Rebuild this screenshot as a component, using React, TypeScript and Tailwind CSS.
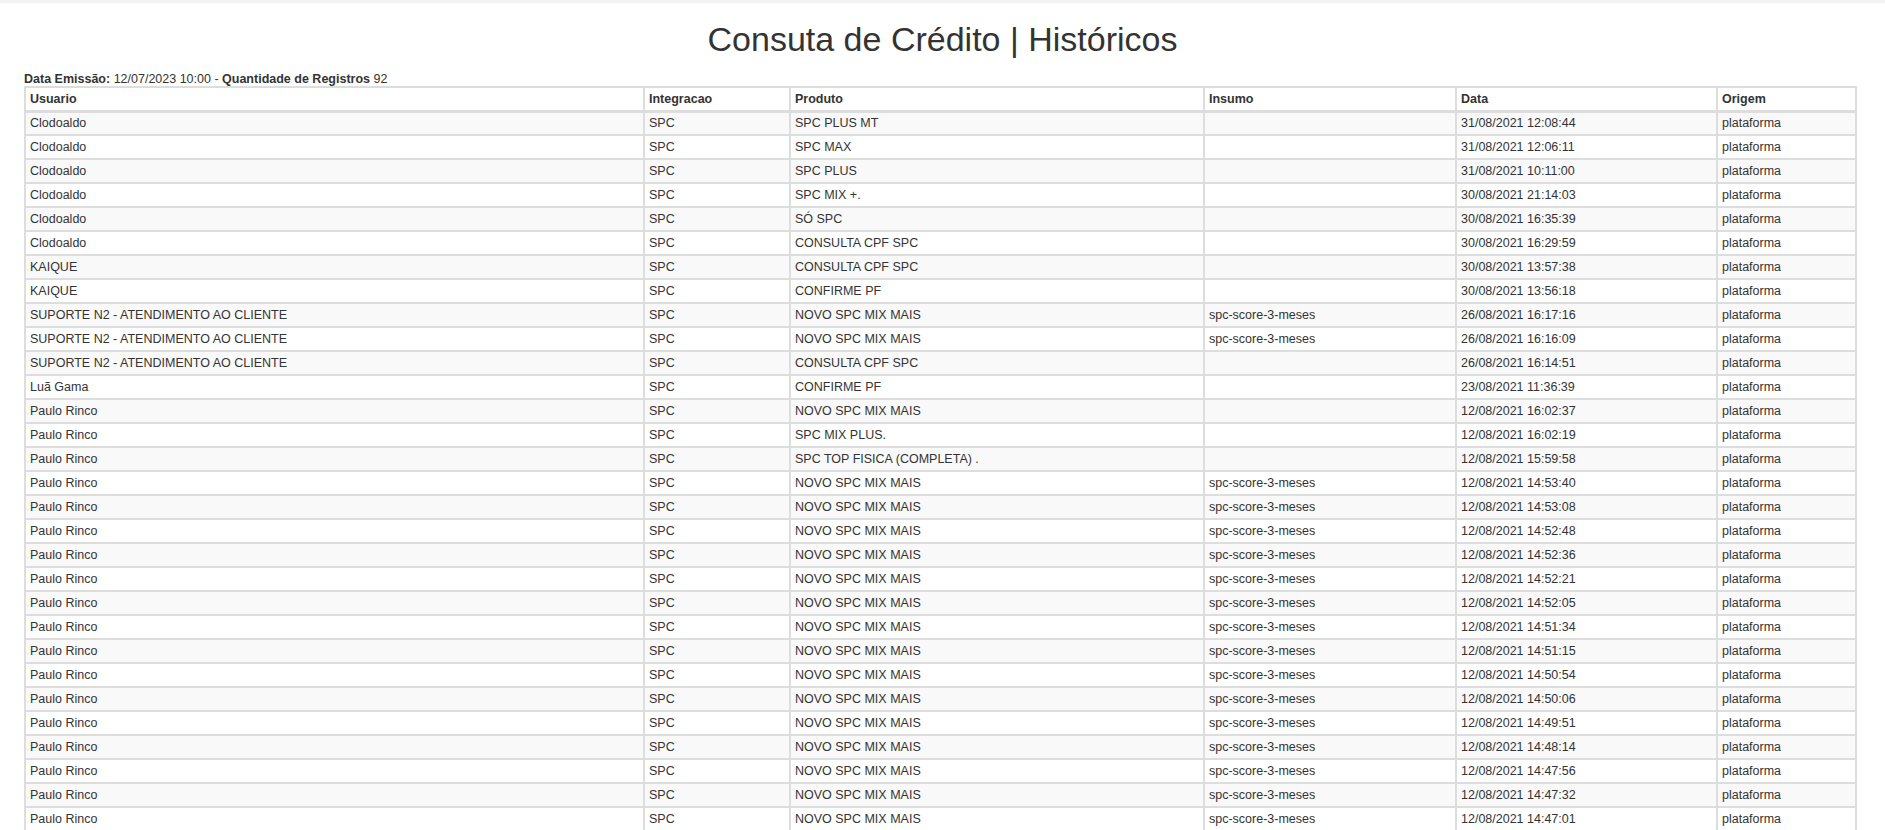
const rows: string[][] = [
["Clodoaldo","SPC","SPC PLUS MT","","31/08/2021 12:08:44"],
["Clodoaldo","SPC","SPC MAX","","31/08/2021 12:06:11"],
["Clodoaldo","SPC","SPC PLUS","","31/08/2021 10:11:00"],
["Clodoaldo","SPC","SPC MIX +.","","30/08/2021 21:14:03"],
["Clodoaldo","SPC","SÓ SPC","","30/08/2021 16:35:39"],
["Clodoaldo","SPC","CONSULTA CPF SPC","","30/08/2021 16:29:59"],
["KAIQUE","SPC","CONSULTA CPF SPC","","30/08/2021 13:57:38"],
["KAIQUE","SPC","CONFIRME PF","","30/08/2021 13:56:18"],
["SUPORTE N2 - ATENDIMENTO AO CLIENTE","SPC","NOVO SPC MIX MAIS","spc-score-3-meses","26/08/2021 16:17:16"],
["SUPORTE N2 - ATENDIMENTO AO CLIENTE","SPC","NOVO SPC MIX MAIS","spc-score-3-meses","26/08/2021 16:16:09"],
["SUPORTE N2 - ATENDIMENTO AO CLIENTE","SPC","CONSULTA CPF SPC","","26/08/2021 16:14:51"],
["Luã Gama","SPC","CONFIRME PF","","23/08/2021 11:36:39"],
["Paulo Rinco","SPC","NOVO SPC MIX MAIS","","12/08/2021 16:02:37"],
["Paulo Rinco","SPC","SPC MIX PLUS.","","12/08/2021 16:02:19"],
["Paulo Rinco","SPC","SPC TOP FISICA (COMPLETA) .","","12/08/2021 15:59:58"],
["Paulo Rinco","SPC","NOVO SPC MIX MAIS","spc-score-3-meses","12/08/2021 14:53:40"],
["Paulo Rinco","SPC","NOVO SPC MIX MAIS","spc-score-3-meses","12/08/2021 14:53:08"],
["Paulo Rinco","SPC","NOVO SPC MIX MAIS","spc-score-3-meses","12/08/2021 14:52:48"],
["Paulo Rinco","SPC","NOVO SPC MIX MAIS","spc-score-3-meses","12/08/2021 14:52:36"],
["Paulo Rinco","SPC","NOVO SPC MIX MAIS","spc-score-3-meses","12/08/2021 14:52:21"],
["Paulo Rinco","SPC","NOVO SPC MIX MAIS","spc-score-3-meses","12/08/2021 14:52:05"],
["Paulo Rinco","SPC","NOVO SPC MIX MAIS","spc-score-3-meses","12/08/2021 14:51:34"],
["Paulo Rinco","SPC","NOVO SPC MIX MAIS","spc-score-3-meses","12/08/2021 14:51:15"],
["Paulo Rinco","SPC","NOVO SPC MIX MAIS","spc-score-3-meses","12/08/2021 14:50:54"],
["Paulo Rinco","SPC","NOVO SPC MIX MAIS","spc-score-3-meses","12/08/2021 14:50:06"],
["Paulo Rinco","SPC","NOVO SPC MIX MAIS","spc-score-3-meses","12/08/2021 14:49:51"],
["Paulo Rinco","SPC","NOVO SPC MIX MAIS","spc-score-3-meses","12/08/2021 14:48:14"],
["Paulo Rinco","SPC","NOVO SPC MIX MAIS","spc-score-3-meses","12/08/2021 14:47:56"],
["Paulo Rinco","SPC","NOVO SPC MIX MAIS","spc-score-3-meses","12/08/2021 14:47:32"],
["Paulo Rinco","SPC","NOVO SPC MIX MAIS","spc-score-3-meses","12/08/2021 14:47:01"],
["Paulo Rinco","SPC","NOVO SPC MIX MAIS","spc-score-3-meses","12/08/2021 14:46:40"],
];

const cell = "border-2 border-[#dddddd] px-[4px] h-[24px] align-middle text-left";

export default function App() {
  return (
    <div className="bg-white text-[#333333] min-h-screen" style={{ fontFamily: '"Liberation Sans", Arial, sans-serif' }}>
      <div className="h-[3px] bg-[#f3f3f3]" />
      <h1 className="text-center text-[34px] leading-[38px] font-normal mt-[17px] mb-[14px]">Consuta de Crédito | Históricos</h1>
      <div className="pl-[24px] pr-[28px]">
        <div className="text-[12.5px] leading-[14px]">
          <b>Data Emissão:</b> 12/07/2023 10:00 - <b>Quantidade de Registros</b> 92
        </div>
        <table className="w-full border-collapse text-[12.5px] leading-[14px]">
          <colgroup>
            <col className="w-[619px]" />
            <col className="w-[146px]" />
            <col className="w-[414px]" />
            <col className="w-[252px]" />
            <col className="w-[261px]" />
            <col />
          </colgroup>
          <thead>
            <tr>
              {["Usuario","Integracao","Produto","Insumo","Data","Origem"].map(h => (
                <th key={h} className={cell + " font-bold border-b-[3px]"}>{h}</th>
              ))}
            </tr>
          </thead>
          <tbody>
            {rows.map((r, i) => (
              <tr key={i} className={i % 2 === 0 ? "bg-[#f9f9f9]" : "bg-white"}>
                {r.map((c, j) => <td key={j} className={cell}>{c}</td>)}
                <td className={cell}>plataforma</td>
              </tr>
            ))}
          </tbody>
        </table>
      </div>
    </div>
  );
}
